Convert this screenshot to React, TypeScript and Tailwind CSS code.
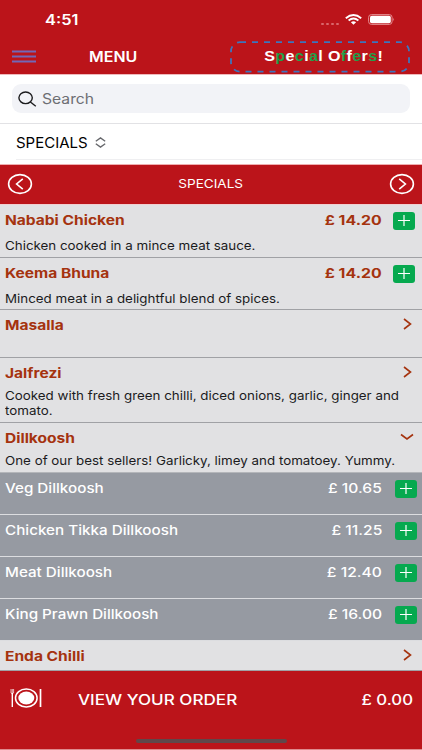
import React from 'react';

interface Dish {
    name: string;
    description?: string;
    price?: string;
    open?: boolean;
    height: string;
    options?: { name: string; price: string }[];
}

const DISHES: Dish[] = [
    { name: 'Nababi Chicken', description: 'Chicken cooked in a mince meat sauce.', price: '£ 14.20', height: 'h-[53px]' },
    { name: 'Keema Bhuna', description: 'Minced meat in a delightful blend of spices.', price: '£ 14.20', height: 'h-[52px]' },
    { name: 'Masalla', height: 'h-[48px]' },
    {
        name: 'Jalfrezi',
        description: 'Cooked with fresh green chilli, diced onions, garlic, ginger and tomato.',
        height: 'h-[65px]',
    },
    {
        name: 'Dillkoosh',
        description: 'One of our best sellers! Garlicky, limey and tomatoey. Yummy.',
        open: true,
        height: 'h-[50px]',
        options: [
            { name: 'Veg Dillkoosh', price: '£ 10.65' },
            { name: 'Chicken Tikka Dillkoosh', price: '£ 11.25' },
            { name: 'Meat Dillkoosh', price: '£ 12.40' },
            { name: 'King Prawn Dillkoosh', price: '£ 16.00' },
        ],
    },
    { name: 'Enda Chilli', height: 'h-[30px]' },
];

const AddButton = () => (
    <button className="w-[22px] h-[18px] rounded-[3px] bg-[#06a94f] flex items-center justify-center">
        <svg viewBox="0 0 12 11" className="w-3 h-[11px]" fill="none" stroke="white" strokeWidth="1.2">
            <path d="M0 5.5h12M6 0v11" />
        </svg>
    </button>
);

const Chevron = ({ down }: { down?: boolean }) => (
    <svg
        viewBox={down ? '0 0 14 8' : '0 0 9 12'}
        className={down ? 'w-[14px] h-2' : 'w-[9px] h-3'}
        fill="none"
        stroke="#a5330f"
        strokeWidth="1.6"
    >
        <path d={down ? 'M1 1.5l6 4.5 6-4.5' : 'M1 1l6.5 5L1 11'} />
    </svg>
);

const CircleArrow = ({ left }: { left?: boolean }) => (
    <svg viewBox="0 0 26 22" className="w-[26px] h-[22px]" fill="none" stroke="white" strokeWidth="1.6">
        <ellipse cx="13" cy="11" rx="11.4" ry="9.4" />
        <path d={left ? 'M15.8 5.8l-6.2 5.2 6.2 5.2' : 'M10.2 5.8l6.2 5.2-6.2 5.2'} />
    </svg>
);

const DishRow = ({ dish }: { dish: Dish }) => (
    <div>
        <div
            className={`${dish.height} bg-[#e1e1e3] border-b pl-[5px] overflow-hidden ${
                dish.open ? 'border-[#b4b6ba]' : 'border-[#a0a1a5]'
            }`}
        >
            <div className="flex items-center h-[31px] text-[#a5330f]">
                <span className="origin-left scale-x-[1.195] text-[13px] font-bold whitespace-nowrap mt-px">{dish.name}</span>
                <span className="ml-auto origin-right scale-x-[1.22] text-[13px] font-bold whitespace-nowrap mt-px">{dish.price}</span>
                <span className={dish.price ? 'ml-[11px] mr-[7px]' : dish.open ? 'mr-2 -mt-1' : 'mr-[10px] -mt-1'}>
                    {dish.price ? <AddButton /> : <Chevron down={dish.open} />}
                </span>
            </div>
            {dish.description && (
                <p
                    className={`w-[360px] origin-left scale-x-[1.113] text-[12px] leading-[15px] text-[#1b1b1d] ${
                        dish.price ? 'mt-[2px]' : '-mt-px'
                    }`}
                >
                    {dish.description}
                </p>
            )}
        </div>
        {dish.options?.map((option) => (
            <div key={option.name} className="h-[42px] bg-[#969aa2] border-b border-[#dcdde0] pl-[5px] pt-[6px]">
                <div className="flex items-center h-[19px] text-white text-[13px] font-medium whitespace-nowrap">
                    <span className="origin-left scale-x-[1.17]">{option.name}</span>
                    <span className="ml-auto origin-right scale-x-[1.2]">{option.price}</span>
                    <span className="ml-[13px] mr-[5px]"><AddButton /></span>
                </div>
            </div>
        ))}
    </div>
);

export default function App() {
    return (
        <div className="w-[422px] h-[750px] flex flex-col overflow-hidden bg-white font-['Inter','Liberation_Sans',sans-serif]">
            <header className="h-[74px] shrink-0 bg-[#bb141a] text-white">
                <div className="h-[39px] flex items-center pl-[45px] pr-[27px]">
                    <span className="origin-left scale-x-[1.17] text-[14px] font-semibold">4:51</span>
                    <div className="ml-auto flex items-center">
                        <div className="flex gap-[2px] mt-[8px] mr-[6px]">
                            {[0, 1, 2, 3].map((dot) => (
                                <span key={dot} className="w-[3px] h-[2px] rounded-full bg-[#d9676b]" />
                            ))}
                        </div>
                        <svg viewBox="0 0 17 11" className="w-[17px] h-[11px] mr-[6px]" fill="none" stroke="white" strokeWidth="1.9">
                            <path d="M.8 4.2q7.7-6.2 15.4 0" />
                            <path d="M3.6 6.5q4.9-3.8 9.8 0" />
                            <path d="M5.9 8.2q2.6-2 5.2 0L8.5 10.8z" fill="white" stroke="none" />
                        </svg>
                        <svg viewBox="0 0 27 11" className="w-[27px] h-[11px]">
                            <rect x=".6" y=".6" width="23.5" height="9.8" rx="2.8" fill="none" stroke="#e58d90" />
                            <rect x="2" y="1.8" width="20.8" height="7.4" rx="1.7" fill="white" />
                            <path d="M25.3 3.8q1.6 1.7 0 3.4z" fill="#e58d90" />
                        </svg>
                    </div>
                </div>
                <div className="h-[35px] flex items-center pl-3 pr-3">
                    <svg viewBox="0 0 24 13" className="w-6 h-[13px]" stroke="#7168b8" strokeWidth="2">
                        <path d="M0 1.5h24M0 6.5h24M0 11.5h24" />
                    </svg>
                    <span className="ml-[53px] origin-left scale-x-[1.14] text-[14px] font-semibold">MENU</span>
                    <div className="relative ml-auto w-[180px] h-8 flex items-center justify-center">
                        <svg viewBox="0 0 180 32" className="absolute inset-0 w-[180px] h-8" fill="none">
                            <rect x="1" y="1.2" width="178" height="29.4" rx="9" stroke="#3d75bd" strokeWidth="1.8" strokeDasharray="6 6" />
                        </svg>
                        <span className="ml-[7px] font-['Liberation_Sans',Arial,sans-serif] text-[14px] font-bold scale-x-[1.15] whitespace-nowrap tracking-[0.3px]">
                            {'Special Offers!'.split('').map((letter, i) => (
                                <span key={i} className={[1, 3, 5, 9, 11, 13].includes(i) ? 'text-[#22a04b]' : ''}>{letter}</span>
                            ))}
                        </span>
                    </div>
                </div>
            </header>

            <div className="h-[50px] shrink-0 border-t border-b border-t-[#efb9bb] border-b-[#e2e2e5] px-3 pt-[9px]">
                <div className="h-[29px] w-[398px] rounded-[9px] bg-[#f2f3f7] flex items-center pl-[6px]">
                    <svg viewBox="0 0 19 16" className="w-[19px] h-4" fill="none" stroke="#1c1c1e" strokeWidth="1.4">
                        <ellipse cx="7.6" cy="6.8" rx="6.7" ry="5.8" />
                        <path d="M12.4 11l5.4 4.2" />
                    </svg>
                    <span className="ml-[5px] origin-left scale-x-[1.12] text-[14px] text-[#6d6e73]">Search</span>
                </div>
            </div>
            <div className="h-[35px] shrink-0 ml-4 mt-[1px] border-b border-[#efeff1] flex items-center">
                <span className="w-[67px] origin-left scale-x-[1.07] text-[14px] text-black">SPECIALS</span>
                <svg viewBox="0 0 11 11" className="ml-[12px] w-[11px] h-[11px]" fill="none" stroke="#66676b" strokeWidth="1.3">
                    <path d="M.8 4.3L5.5.9l4.7 3.4M.8 6.7l4.7 3.4 4.7-3.4" />
                </svg>
            </div>

            <div className="mt-1 h-[41px] shrink-0 bg-[#bb141a] border-t border-b border-t-[#efaeb0] border-b-[#f1cfd1] flex items-center justify-between px-[7px] pb-px">
                <CircleArrow left />
                <span className="text-white text-[12px] scale-x-[1.13]">SPECIALS</span>
                <CircleArrow />
            </div>

            <main className="h-[466px] shrink-0 overflow-hidden">
                {DISHES.map((dish) => (
                    <DishRow key={dish.name} dish={dish} />
                ))}
            </main>

            <footer className="h-[79px] shrink-0 bg-[#bb141a] border-b border-[#df8b8e] text-white flex flex-col">
                <div className="h-[55px] flex items-center pl-[10px] pr-[9px]">
                    <svg viewBox="0 0 32 20" className="w-8 h-5 -mt-[2px]" fill="none" stroke="white">
                        <ellipse cx="16.3" cy="10" rx="10.8" ry="9" strokeWidth="1.5" />
                        <ellipse cx="16.3" cy="10" rx="8" ry="6.5" fill="white" stroke="none" />
                        <path d="M1 1v4q1.3 1.5 2.6 0V1M2.3 1v4" strokeWidth=".7" />
                        <path d="M2.3 5v14" strokeWidth="1.4" />
                        <path d="M30.5 1v18" strokeWidth="1.7" />
                    </svg>
                    <span className="ml-9 mt-px origin-left scale-x-[1.22] text-[14px] font-medium whitespace-nowrap">VIEW YOUR ORDER</span>
                    <span className="ml-auto mt-px origin-right scale-x-[1.2] text-[14px] font-medium whitespace-nowrap">£ 0.00</span>
                </div>
                <div className="mt-[13px] mx-auto w-[151px] h-1 rounded-full bg-[#60474a]" />
            </footer>
        </div>
    );
}
